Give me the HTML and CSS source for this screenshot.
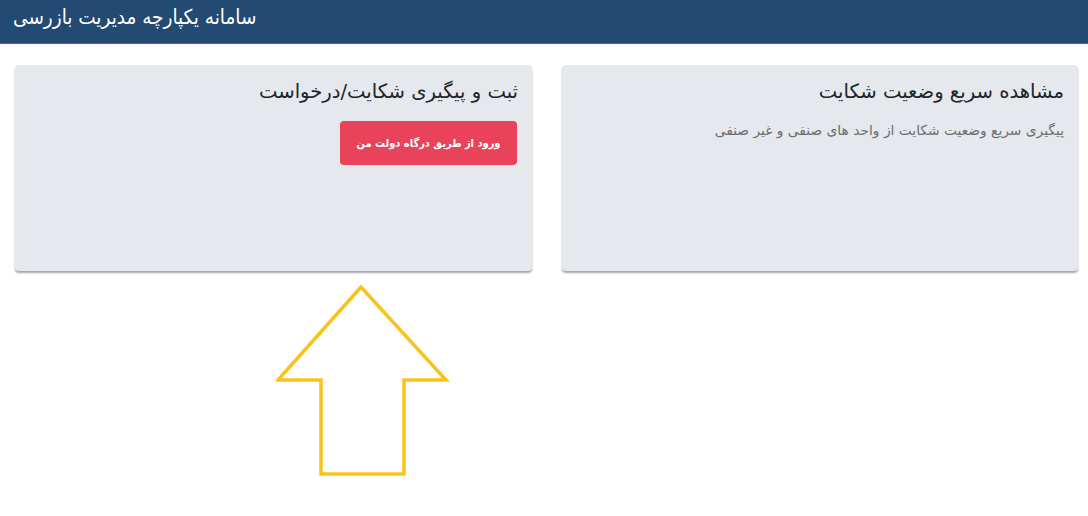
FILE: index.html
```html
<!DOCTYPE html>
<html lang="fa" dir="rtl">
<head>
<meta charset="utf-8">
<link rel="stylesheet" href="styles.css">
</head>
<body>
<header class="topbar">
  <h1 class="brand">سامانه یکپارچه مدیریت بازرسی</h1>
</header>
<main class="cards">
  <section class="card">
    <h2 class="card-title">مشاهده سریع وضعیت شکایت</h2>
    <p class="card-text">پیگیری سریع وضعیت شکایت از واحد های صنفی و غیر صنفی</p>
  </section>
  <section class="card">
    <h2 class="card-title">ثبت و پیگیری شکایت/درخواست</h2>
    <a class="btn-login" href="#">ورود از طریق درگاه دولت من</a>
  </section>
</main>
<svg class="arrow" width="180" height="200" viewBox="0 0 180 200">
  <polygon points="85,2 2,95 45,95 45,189 128,189 128,95 170,95" fill="none" stroke="#f7c31c" stroke-width="3.5" stroke-linejoin="miter"/>
</svg>
</body>
</html>
```
FILE: styles.css
```css
html, body {
  margin: 0;
  padding: 0;
  background: #ffffff;
  font-family: "DejaVu Sans", "Noto Sans", sans-serif;
}
body {
  position: relative;
  width: 1088px;
  height: 516px;
  overflow: hidden;
}
.topbar {
  height: 43px;
  background: #234a72;
  border-bottom: 1px solid #4a6b8e;
  display: flex;
  justify-content: flex-end;
  align-items: flex-start;
  padding: 0 13px;
}
.brand {
  margin: 3px 0 0 0;
  color: #ffffff;
  font-family: "DejaVu Sans Condensed", "DejaVu Sans", sans-serif;
  font-weight: normal;
  font-size: 20.5px;
  line-height: 28px;
}
.cards {
  display: grid;
  grid-template-columns: 516px 517px;
  gap: 30px;
  padding: 21px 10px 0 15px;
}
.card {
  height: 206px;
  box-sizing: border-box;
  background: #e5e8ec;
  border-radius: 4px;
  box-shadow: 0 2px 2px rgba(0, 0, 0, 0.35);
  padding: 12px 14px 0 14px;
  display: flex;
  flex-direction: column;
  align-items: flex-start;
}
.card-title {
  margin: 0;
  font-weight: normal;
  font-size: 19.6px;
  line-height: 30px;
  color: #212529;
}
.card-text {
  margin: 12px 0 0 0;
  font-size: 13.8px;
  line-height: 22px;
  color: #6c6f73;
}
.btn-login {
  margin-top: 14px;
  margin-right: 1px;
  width: 177px;
  height: 44px;
  box-sizing: border-box;
  display: flex;
  align-items: center;
  justify-content: center;
  background: #e8435a;
  color: #ffffff;
  border-radius: 4px;
  font-family: "DejaVu Sans Condensed", "DejaVu Sans", sans-serif;
  font-weight: bold;
  font-size: 11px;
  white-space: nowrap;
  text-decoration: none;
}
.arrow {
  position: absolute;
  left: 276px;
  top: 285px;
}
```
